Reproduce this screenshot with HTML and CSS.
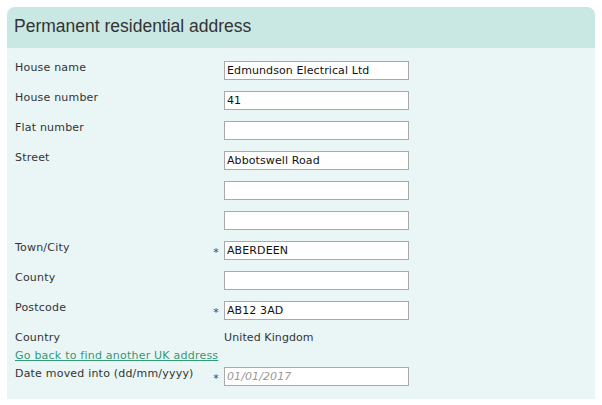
FILE: index.html
```html
<!DOCTYPE html>
<html lang="en">
<head>
<meta charset="utf-8">
<title>Permanent residential address</title>
<link rel="stylesheet" href="styles.css">
</head>
<body>
<section class="panel">
  <h2 class="panel-title">Permanent residential address</h2>
  <div class="panel-body">
    <div class="row"><label class="label">House name</label><span class="req"></span><input class="field" type="text" value="Edmundson Electrical Ltd"></div>
    <div class="row"><label class="label">House number</label><span class="req"></span><input class="field" type="text" value="41"></div>
    <div class="row"><label class="label">Flat number</label><span class="req"></span><input class="field" type="text" value=""></div>
    <div class="row"><label class="label">Street</label><span class="req"></span><input class="field" type="text" value="Abbotswell Road"></div>
    <div class="row"><span class="label"></span><span class="req"></span><input class="field" type="text" value=""></div>
    <div class="row"><span class="label"></span><span class="req"></span><input class="field" type="text" value=""></div>
    <div class="row"><label class="label">Town/City</label><span class="req">*</span><input class="field" type="text" value="ABERDEEN"></div>
    <div class="row"><label class="label">County</label><span class="req"></span><input class="field" type="text" value=""></div>
    <div class="row"><label class="label">Postcode</label><span class="req">*</span><input class="field" type="text" value="AB12 3AD"></div>
    <div class="row row-text"><span class="label">Country</span><span class="req"></span><span class="value">United Kingdom</span></div>
    <a class="back-link" href="#">Go back to find another UK address</a>
    <div class="row row-last"><label class="label">Date moved into (dd/mm/yyyy)</label><span class="req">*</span><input class="field" type="text" placeholder="01/01/2017"></div>
  </div>
</section>
</body>
</html>
```

FILE: styles.css
```css
html, body {
  margin: 0;
  padding: 0;
  background: #ffffff;
}

body {
  padding: 7px;
  font-family: Verdana, "DejaVu Sans", sans-serif;
  font-size: 11px;
  line-height: 13px;
  color: #333333;
}

.panel {
  width: 588px;
  border-radius: 8px 8px 0 0;
  background: #eaf6f6;
}

.panel-title {
  margin: 0;
  padding: 9px 7px 12px;
  background: #c9e8e3;
  border-radius: 8px 8px 0 0;
  font-family: Arial, "Liberation Sans", sans-serif;
  font-weight: normal;
  font-size: 17.5px;
  line-height: 20px;
  color: #333333;
}

.panel-body {
  padding: 13px 8px 13px;
}

.row {
  display: grid;
  grid-template-columns: 193px 16px 185px;
  align-items: start;
  margin-bottom: 11px;
}

.row-text {
  margin-bottom: 5px;
}

.row-last {
  margin-bottom: 0;
}

.label {
  display: block;
  color: #333333;
  letter-spacing: 0.2px;
  white-space: nowrap;
}

.req {
  display: block;
  padding-top: 5px;
  text-align: center;
  color: #444444;
  font-size: 11px;
}

.value {
  color: #333333;
  letter-spacing: 0.1px;
}

.field {
  box-sizing: border-box;
  width: 185px;
  height: 19px;
  margin: 0;
  padding: 0 2px;
  border: 1px solid #aaaaaa;
  border-radius: 0;
  background: #ffffff;
  font-family: Verdana, "DejaVu Sans", sans-serif;
  font-size: 11px;
  letter-spacing: 0.1px;
  color: #111111;
  outline: none;
}

.field::placeholder {
  color: #999999;
  font-style: italic;
}

.back-link {
  display: block;
  width: max-content;
  margin-bottom: 5px;
  color: #339977;
  letter-spacing: 0.22px;
  text-decoration: underline;
}
```
